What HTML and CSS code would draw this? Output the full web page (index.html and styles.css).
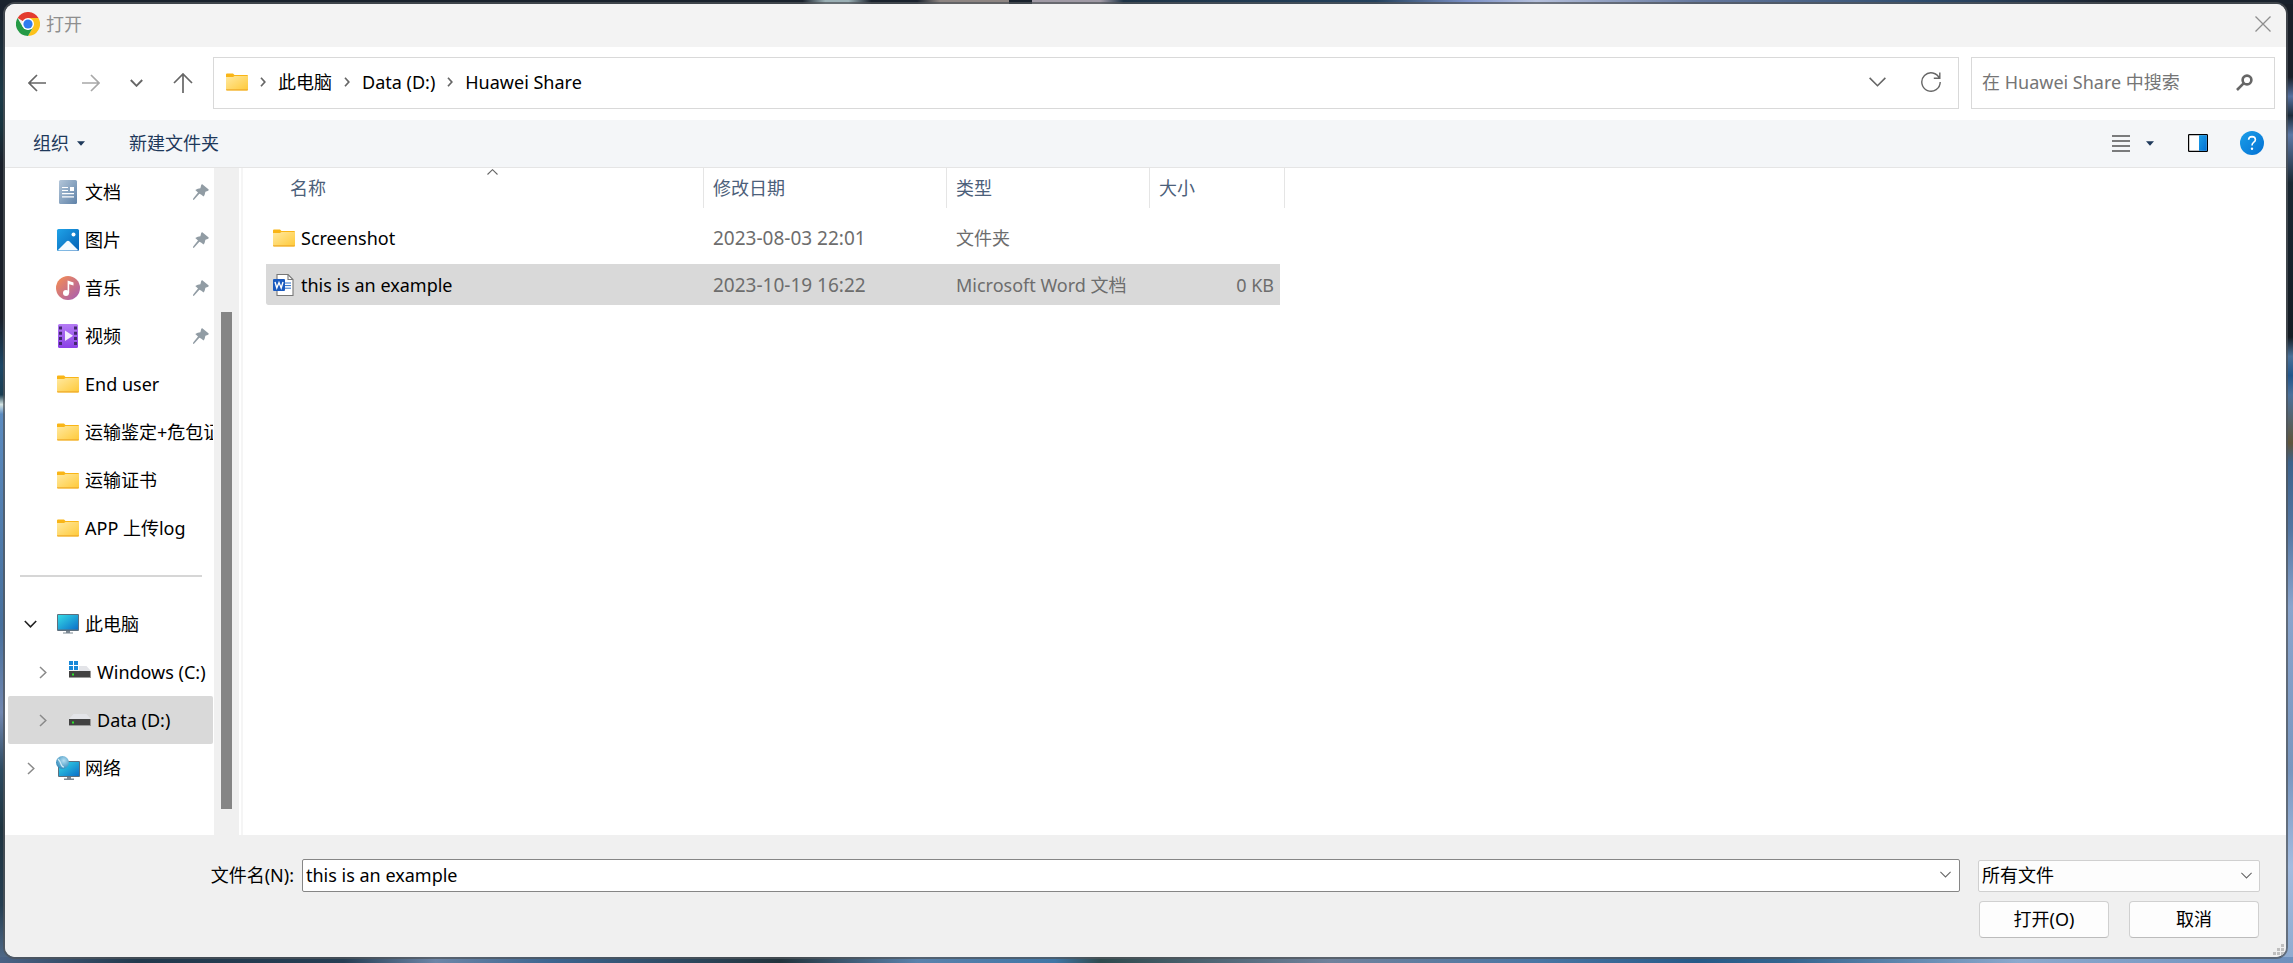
FILE: index.html
```html
<!DOCTYPE html>
<html lang="zh-CN">
<head>
    <meta charset="UTF-8">
    <title>打开</title>
    <meta name="viewport" content="width=device-width, initial-scale=1.0">
    <link rel="stylesheet" href="styles.css">
</head>
<body>
    <!-- shared icons -->
    <svg class="defs" width="0" height="0" aria-hidden="true">
        <defs>
            <linearGradient id="gFolder" x1="0" y1="0" x2="1" y2="1">
                <stop offset="0" stop-color="#ffe9a0"/><stop offset="1" stop-color="#ffc937"/>
            </linearGradient>
            <linearGradient id="gDoc" x1="0" y1="0" x2="1" y2="1">
                <stop offset="0" stop-color="#b3c6d9"/><stop offset="1" stop-color="#5f82a8"/>
            </linearGradient>
            <linearGradient id="gPic" x1="0" y1="0" x2="1" y2="1">
                <stop offset="0" stop-color="#1fa3e8"/><stop offset="1" stop-color="#0560b5"/>
            </linearGradient>
            <linearGradient id="gMusic" x1="0" y1="0" x2="1" y2="1">
                <stop offset="0.1" stop-color="#f08a58"/><stop offset="1" stop-color="#a45bb5"/>
            </linearGradient>
            <linearGradient id="gVideo" x1="0" y1="0" x2="0" y2="1">
                <stop offset="0" stop-color="#b57cf5"/><stop offset="1" stop-color="#8a3fe6"/>
            </linearGradient>
            <linearGradient id="gScreen" x1="0" y1="0" x2="1" y2="1">
                <stop offset="0" stop-color="#35dbe6"/><stop offset="1" stop-color="#0b6fc9"/>
            </linearGradient>
            <linearGradient id="gHelp" x1="0" y1="0" x2="1" y2="1">
                <stop offset="0" stop-color="#1c9fe8"/><stop offset="1" stop-color="#0270d4"/>
            </linearGradient>
            <radialGradient id="gGlobe" cx="0.6" cy="0.35" r="0.7">
                <stop offset="0" stop-color="#b5dff2"/><stop offset="1" stop-color="#2b86b8"/>
            </radialGradient>
            <symbol id="folder" viewBox="0 0 22 18">
                <path d="M0 1.5Q0 0.5 1 0.5H7L8.5 2H21Q22 2 22 3V9H0Z" fill="#f9b517"/>
                <path d="M0 4H7L8.5 3H22V16Q22 17.5 21 17.5H1Q0 17.5 0 16Z" fill="url(#gFolder)"/>
                <path d="M0 16.2H22V16.6Q22 17.5 21 17.5H1Q0 17.5 0 16.6Z" fill="#f0ac2c"/>
            </symbol>
            <symbol id="pin" viewBox="0 0 16 16">
                <path d="M9.3 0.3L15.7 5.6Q15.9 6.7 14.6 7L12.4 7.8Q11.9 10.9 10.6 12.6L8 10.5L6.4 9.8L1 15.8L0 15.9L0.2 14.6L5 8.6L2.3 5.9Q4.8 4.4 7.4 4.3L8.2 1Q8.6 0.1 9.3 0.3Z" fill="#919ca4"/>
            </symbol>
            <symbol id="drive" viewBox="0 0 22 12">
                <path d="M4.5 0H17.5L22 5H0Z" fill="#e3e4e8"/>
                <rect x="0" y="5" width="22" height="7" fill="#9a9a9a"/>
                <rect x="0" y="5" width="21" height="6" fill="#424242"/>
                <rect x="3" y="7.5" width="2" height="2" fill="#2be52b"/>
            </symbol>
            <symbol id="right" viewBox="0 0 8 13">
                <path d="M1 1L6.8 6.5L1 12" fill="none" stroke="currentColor" stroke-width="1.5"/>
            </symbol>
            <symbol id="crumb" viewBox="0 0 6 10">
                <path d="M1 0.8L4.8 5L1 9.2" fill="none" stroke="currentColor" stroke-width="1.7"/>
            </symbol>
            <symbol id="down" viewBox="0 0 16 9">
                <path d="M0.6 0.6L8 8L15.4 0.6" fill="none" stroke="currentColor" stroke-width="1.5"/>
            </symbol>
            <symbol id="triangle" viewBox="0 0 8 5">
                <path d="M0 0.3H8L4 4.8Z" fill="currentColor"/>
            </symbol>
        </defs>
    </svg>

    <div class="dialog">
        <header class="titlebar">
            <svg class="logo" viewBox="0 0 24 24">
                <path d="M12 12L1.6 6A12 12 0 0 1 22.4 6Z" fill="#e33b2e"/>
                <path d="M12 12V0L22.4 6H12Z" fill="#e33b2e"/>
                <path d="M12 6H22.4A12 12 0 0 1 12 24L17.2 15Z" fill="#fcc21b"/>
                <path d="M1.6 6L6.8 15L12 18L17.2 15L12 24A12 12 0 0 1 1.6 6Z" fill="#259a46"/>
                <circle cx="12" cy="12" r="6" fill="#fff"/>
                <circle cx="12" cy="12" r="4.6" fill="#2f7cf0"/>
            </svg>
            <span class="title">打开</span>
            <button class="icon-btn close" aria-label="关闭">
                <svg width="16" height="16" viewBox="0 0 16 16"><path d="M0.5 0.5L15.5 15.5M15.5 0.5L0.5 15.5" stroke="currentColor" stroke-width="1.3"/></svg>
            </button>
        </header>

        <nav class="navbar">
            <div class="nav-buttons">
                <button class="icon-btn back" aria-label="后退">
                    <svg width="18" height="18" viewBox="0 0 18 18"><path d="M18 9H1M9 1L1 9L9 17" fill="none" stroke="#666" stroke-width="1.7"/></svg>
                </button>
                <button class="icon-btn" aria-label="前进">
                    <svg width="18" height="18" viewBox="0 0 18 18"><path d="M0 9H17M9 1L17 9L9 17" fill="none" stroke="#a8a8a8" stroke-width="1.7"/></svg>
                </button>
                <button class="icon-btn" aria-label="最近的位置">
                    <svg width="13" height="8" viewBox="0 0 13 8"><path d="M0.8 1L6.5 6.8L12.2 1" fill="none" stroke="#666" stroke-width="1.9"/></svg>
                </button>
                <button class="icon-btn" aria-label="上移">
                    <svg width="20" height="20" viewBox="0 0 20 20"><path d="M10 20V1M1 10L10 1L19 10" fill="none" stroke="#666" stroke-width="1.7"/></svg>
                </button>
            </div>
            <div class="address">
                <svg width="22" height="18"><use href="#folder"/></svg>
                <svg class="sep" width="6" height="10"><use href="#crumb"/></svg>
                <a href="#">此电脑</a>
                <svg class="sep" width="6" height="10"><use href="#crumb"/></svg>
                <a href="#">Data (D:)</a>
                <svg class="sep" width="6" height="10"><use href="#crumb"/></svg>
                <a href="#">Huawei Share</a>
                <div class="address-tools">
                    <button class="icon-btn" aria-label="以前的位置"><svg width="17" height="10"><use href="#down"/></svg></button>
                    <button class="icon-btn" aria-label="刷新">
                        <svg width="20" height="20" viewBox="0 0 20 20"><path d="M18.5 6.5A9.2 9.2 0 1 0 19.2 10M18.8 0.5V6.2H12.8" fill="none" stroke="currentColor" stroke-width="1.4"/></svg>
                    </button>
                </div>
            </div>
            <div class="search">
                <input type="text" aria-label="搜索" placeholder="在 Huawei Share 中搜索">
                <button class="icon-btn" aria-label="搜索">
                    <svg width="17" height="17" viewBox="0 0 17 17"><circle cx="11" cy="6" r="4.4" fill="none" stroke="currentColor" stroke-width="2.6"/><path d="M7.6 9.4L1 16" stroke="currentColor" stroke-width="2.6"/></svg>
                </button>
            </div>
        </nav>

        <div class="toolbar">
            <button class="tool">组织 <svg width="8" height="5"><use href="#triangle"/></svg></button>
            <button class="tool">新建文件夹</button>
            <div class="views">
                <button class="icon-btn" aria-label="更改视图">
                    <svg width="18" height="17" viewBox="0 0 18 17"><path d="M0 1H18M0 6H18M0 11H18M0 16H18" stroke="#000" stroke-width="1.2"/></svg>
                </button>
                <button class="icon-btn view-more" aria-label="更多选项"><svg width="8" height="5"><use href="#triangle"/></svg></button>
                <button class="icon-btn preview" aria-label="预览窗格">
                    <svg width="20" height="18" viewBox="0 0 20 18"><rect x="0.6" y="0.6" width="18.8" height="16.8" rx="0.6" fill="#fff" stroke="#000" stroke-width="1.2"/><rect x="11" y="1.2" width="7.8" height="15.6" fill="url(#gHelp)"/></svg>
                </button>
                <button class="icon-btn" aria-label="帮助">
                    <svg width="24" height="24" viewBox="0 0 24 24"><circle cx="12" cy="12" r="12" fill="url(#gHelp)"/><path d="M8.6 8.8Q8.8 5.6 12 5.6Q15.4 5.7 15.4 8.7Q15.4 10.3 13.6 11.4Q12 12.5 12 14.6" fill="none" stroke="#fff" stroke-width="1.6"/><circle cx="12" cy="17.8" r="1.2" fill="#fff"/></svg>
                </button>
            </div>
        </div>

        <main class="content">
            <aside class="sidebar">
                <ul class="tree">
                    <li>
                        <svg class="icon" viewBox="0 0 24 24"><rect x="3" width="18" height="24" rx="1.5" fill="url(#gDoc)"/><path d="M6 7.5H12M6 10.5H12M6 13.6H18M6 16.8H18" stroke="#fff" stroke-width="1.2"/><rect x="14" y="7" width="4" height="4" fill="#fff"/></svg>
                        <span>文档</span><svg class="pin"><use href="#pin"/></svg>
                    </li>
                    <li>
                        <svg class="icon" viewBox="0 0 24 24"><rect x="1" y="1" width="22" height="22" rx="1.5" fill="url(#gPic)"/><path d="M2 22L10.5 13.5Q12 12 13.5 13.5L22 22Q21.5 22.6 21 22.6H3Q2.4 22.6 2 22Z" fill="#f4faff"/><circle cx="17.5" cy="6.5" r="2" fill="#fff"/></svg>
                        <span>图片</span><svg class="pin"><use href="#pin"/></svg>
                    </li>
                    <li>
                        <svg class="icon" viewBox="0 0 24 24"><circle cx="12" cy="12" r="12" fill="url(#gMusic)"/><circle cx="10" cy="17" r="3" fill="#fff"/><path d="M11.6 17V4.5L17.5 6.6V9.6L13.2 8.2V17Z" fill="#fff"/></svg>
                        <span>音乐</span><svg class="pin"><use href="#pin"/></svg>
                    </li>
                    <li>
                        <svg class="icon" viewBox="0 0 24 24"><rect x="2" width="20" height="24" rx="1.5" fill="url(#gVideo)"/><path d="M4.5 2.5V22M19.5 2.5V22" stroke="#43286e" stroke-width="3" stroke-dasharray="3 2.2"/><path d="M9 6.5L17 11.8L9 17Z" fill="#f3ecfd"/></svg>
                        <span>视频</span><svg class="pin"><use href="#pin"/></svg>
                    </li>
                    <li><svg class="icon folder"><use href="#folder"/></svg><span>End user</span></li>
                    <li><svg class="icon folder"><use href="#folder"/></svg><span>运输鉴定+危包证</span></li>
                    <li><svg class="icon folder"><use href="#folder"/></svg><span>运输证书</span></li>
                    <li><svg class="icon folder"><use href="#folder"/></svg><span>APP 上传log</span></li>
                </ul>
                <hr>
                <ul class="tree">
                    <li>
                        <svg class="arrow open" viewBox="0 0 13 8"><path d="M0.8 1L6.5 6.8L12.2 1" fill="none" stroke="currentColor" stroke-width="1.6"/></svg>
                        <svg class="icon" viewBox="0 0 24 24"><rect x="1" y="2" width="22" height="17" rx="1" fill="#5d6f7e"/><rect x="2" y="3" width="20" height="14.5" fill="url(#gScreen)"/><path d="M10 19H14V20.5H17V21.5H7V20.5H10Z" fill="#7b8792"/></svg>
                        <span>此电脑</span>
                    </li>
                    <li class="child">
                        <svg class="arrow"><use href="#right"/></svg>
                        <svg class="icon" viewBox="0 0 24 24"><use href="#drive" x="1" y="6" width="22" height="12"/><rect x="0" y="0" width="11" height="10.5" fill="#fff"/><path d="M1 1H5V5H1ZM6 1H10V5H6ZM1 6H5V10H1ZM6 6H10V10H6Z" fill="#1788d8"/></svg>
                        <span>Windows (C:)</span>
                    </li>
                    <li class="child selected">
                        <svg class="arrow"><use href="#right"/></svg>
                        <svg class="icon" viewBox="0 0 24 24"><use href="#drive" x="1" y="6" width="22" height="12"/></svg>
                        <span>Data (D:)</span>
                    </li>
                    <li>
                        <svg class="arrow"><use href="#right"/></svg>
                        <svg class="icon" viewBox="0 0 24 24"><rect x="2" y="5" width="22" height="16" rx="1" fill="#5d6f7e"/><rect x="3" y="6" width="20" height="14" fill="url(#gScreen)"/><path d="M11 21H15V22.5H18V24H8V22.5H11Z" fill="#7b8792"/><circle cx="6.5" cy="6.5" r="6.5" fill="url(#gGlobe)"/><path d="M2 3Q4 5 5 8T8 11" fill="none" stroke="#cfeaf5" stroke-width="1.2"/></svg>
                        <span>网络</span>
                    </li>
                </ul>
            </aside>
            <div class="scrollbar"><div class="thumb"></div></div>
            <section class="files">
                <table>
                    <colgroup>
                        <col class="col-name"><col class="col-date"><col class="col-type"><col class="col-size">
                    </colgroup>
                    <thead>
                        <tr>
                            <th class="sorted">名称<svg class="sort" width="11" height="6" viewBox="0 0 11 6"><path d="M0.5 5.5L5.5 0.7L10.5 5.5" fill="none" stroke="#666" stroke-width="1.1"/></svg></th>
                            <th>修改日期</th>
                            <th>类型</th>
                            <th>大小</th>
                        </tr>
                    </thead>
                    <tbody>
                        <tr>
                            <td><div class="file"><svg class="icon folder"><use href="#folder"/></svg><span>Screenshot</span></div></td>
                            <td class="date">2023-08-03 22:01</td>
                            <td>文件夹</td>
                            <td></td>
                        </tr>
                        <tr class="selected">
                            <td><div class="file">
                                <svg class="icon" viewBox="0 0 24 24"><path d="M5 1.5H16L21 6.5V22.5H5Z" fill="#fff" stroke="#777" stroke-width="1.1"/><path d="M16 1.5V6.5H21" fill="none" stroke="#777" stroke-width="1.1"/><path d="M13 10H19M13 12.6H19M13 15.2H19" stroke="#2b6fc9"/><rect x="1" y="6" width="12" height="12" rx="1" fill="#1a5abf"/><path d="M3 9L4.8 15L7 9.6L9.2 15L11 9" fill="none" stroke="#fff" stroke-width="1.4"/></svg>
                                <span>this is an example</span></div></td>
                            <td class="date">2023-10-19 16:22</td>
                            <td>Microsoft Word 文档</td>
                            <td>0 KB</td>
                        </tr>
                    </tbody>
                </table>
            </section>
        </main>

        <footer class="footer">
            <label for="filename">文件名(N):</label>
            <div class="combo">
                <input type="text" id="filename" value="this is an example">
                <button class="icon-btn" aria-label="文件名列表"><svg width="11" height="7"><use href="#down"/></svg></button>
            </div>
            <div class="filter">
                <select aria-label="文件类型">
                    <option>所有文件</option>
                </select>
                <svg width="11" height="7"><use href="#down"/></svg>
            </div>
            <div class="actions">
                <button class="btn">打开(O)</button>
                <button class="btn">取消</button>
            </div>
            <svg class="grip" width="12" height="12" viewBox="0 0 12 12"><path d="M8 0H11V3H8ZM4 4H7V7H4ZM8 4H11V7H8ZM0 8H3V11H0ZM4 8H7V11H4ZM8 8H11V11H8Z" fill="#bfbfbf"/></svg>
        </footer>
    </div>
</body>
</html>
```
FILE: styles.css
```css
* {
    box-sizing: border-box;
}

/* desktop wallpaper showing around the dialog */
body {
    margin: 0;
    min-height: 100vh;
    display: flex;
    padding: 4px 7px 6px 5px;
    font: 18px/24px "Noto Sans", "Noto Sans CJK SC", sans-serif;
    color: #000;
    background-color: #42688f;
    background-image:
        linear-gradient(to right, #1a222d 0 35%, #9bb0b5 36% 37%, #1a222d 38% 40%, #8d8582 41% 44%, #1a222d 44% 45%, #a09aa5 45% 48%, #1d3245 49%, #22405c 60%, #7d92c8 64%, #b5c0dc 67%, #66799f 74%, #2c4a6c 84%, #1a222d 92%),
        linear-gradient(to right, #4a6285, #22394d 6%, #263e54 15%, #6d86a8 19%, #3d6590 24%, #22333c 34%, #5b82ac 40%, #4076a6 46%, #2f4a4e 48%, #71829c 58%, #4a76a4 67%, #265a88 74%, #35658f 78%, #8ca9cd 88%, #6e90bd),
        linear-gradient(to bottom, #191f2b, #1b3a48 10%, #17343f 13%, #191f2a 17% 33%, #1c4766 38%, #1a3e52 41%, #d5e5e4 42%, #5b8bc0 43%, #47709d 65%, #7187b0 74%, #2c4a60 80%, #1f3440 86%, #263f52 94%, #536c8c),
        linear-gradient(to bottom, #191f28 0 8%, #55709f 10%, #1c2b3a 12%, #5c78a6 14%, #1a2833 19%, #141c24 35%, #4a7199 37%, #23568b 39%, #4c719b 41%, #5f553c 46%, #3d628b 48%, #5376a2 55%, #8aa5cd 63%, #7997c0 80%, #a3bce0 90%, #8daacf);
    background-repeat: no-repeat;
    background-position: 0 0, 0 100%, 0 0, 100% 0;
    background-size: 100% 4px, 100% 6px, 10px 100%, 12px 100%;
}

.defs {
    position: absolute;
}

svg {
    display: block;
    flex: none;
}

button, input, select {
    font: inherit;
    color: inherit;
}

ul {
    list-style: none;
    margin: 0;
    padding: 0;
}

.dialog {
    flex: 1;
    min-width: 0;
    display: flex;
    flex-direction: column;
    background: #fff;
    border-radius: 10px;
    overflow: hidden;
    box-shadow: 0 0 0 2px rgba(80, 84, 88, 0.7);
}

.icon-btn {
    display: flex;
    align-items: center;
    justify-content: center;
    padding: 0;
    border: none;
    background: none;
    color: #666;
}

/* title bar */
.titlebar {
    display: flex;
    align-items: center;
    gap: 6px;
    height: 43px;
    padding: 0 15px 3px 11px;
    background: #f3f3f3;
    color: #8e8e8e;
}

.logo {
    width: 24px;
    height: 24px;
}

.close {
    margin-left: auto;
    color: #8e8e8e;
}

/* navigation */
.navbar {
    display: flex;
    align-items: center;
    gap: 12px;
    height: 73px;
    padding: 0 11px 1px 23px;
}

.nav-buttons {
    display: flex;
    align-items: center;
    gap: 30px;
    margin-right: 8px;
}

.back {
    margin-right: 6px;
}

.address, .search {
    display: flex;
    align-items: center;
    height: 52px;
    border: 1px solid #d9d9d9;
}

.address {
    flex: 1;
    gap: 12px;
    padding: 0 17px 2px 12px;
}

.address a {
    color: inherit;
    text-decoration: none;
}

.sep {
    color: #666;
}

.address-tools {
    display: flex;
    gap: 35px;
    margin-left: auto;
}

.search {
    width: 304px;
    padding: 0 21px 2px 10px;
}

.search input {
    flex: 1;
    min-width: 0;
    padding: 0;
    border: none;
    outline: none;
    background: none;
}

.search input::placeholder {
    color: #757575;
}

/* toolbar */
.toolbar {
    display: flex;
    align-items: center;
    gap: 44px;
    height: 48px;
    padding: 0 22px 1px 28px;
    background: #f4f6f8;
    border-bottom: 1px solid #e5e5e5;
    color: #1e395b;
}

.tool {
    display: flex;
    align-items: center;
    gap: 8px;
    padding: 0;
    border: none;
    background: none;
}

.views {
    display: flex;
    align-items: center;
    margin-left: auto;
}

.view-more {
    margin: 0 34px 0 16px;
    color: #1e395b;
}

.preview {
    margin-right: 32px;
}

/* sidebar */
.content {
    flex: 1;
    display: flex;
    min-height: 0;
}

.sidebar {
    width: 209px;
    padding: 0 1px 0 3px;
    overflow: hidden;
}

.tree li {
    display: flex;
    align-items: center;
    position: relative;
    height: 48px;
    padding-left: 48px;
    border-radius: 2px;
    white-space: nowrap;
    overflow: hidden;
}

.tree .child {
    padding-left: 60px;
}

.selected {
    background: #d9d9d9;
}

.icon {
    width: 24px;
    height: 24px;
    margin-right: 5px;
}

.folder {
    width: 22px;
    height: 18px;
    margin: 0 6px 0 1px;
}

.pin {
    width: 16px;
    height: 16px;
    margin: 0 4px 0 auto;
}

.arrow {
    position: absolute;
    left: 19px;
    width: 8px;
    height: 13px;
    color: #8a8a8a;
}

.child .arrow {
    left: 31px;
}

.arrow.open {
    left: 16px;
    width: 13px;
    height: 8px;
    color: #222;
}

hr {
    height: 2px;
    margin: 23px 11px 23px 12px;
    border: none;
    background: #d6d6d6;
}

.scrollbar {
    width: 25px;
    padding: 144px 7px 26px;
    background: #f0f0f0;
}

.thumb {
    height: 100%;
    background: #858585;
}

/* file list */
.files {
    flex: 1;
    min-width: 0;
    margin-left: 2px;
    padding-left: 23px;
    border-left: 2px solid #f5f5f5;
}

table {
    width: 1019px;
    table-layout: fixed;
    border-collapse: separate;
    border-spacing: 0;
}

.col-name {
    width: 438px;
}

.col-date {
    width: 243px;
}

.col-type {
    width: 203px;
}

.col-size {
    width: 135px;
}

th {
    height: 40px;
    padding: 0 9px;
    border-right: 1px solid #e5e5e5;
    font-weight: normal;
    text-align: left;
    color: #4c607a;
}

.sorted {
    position: relative;
    padding-left: 24px;
}

.sort {
    position: absolute;
    top: 1px;
    left: 221px;
}

tbody::before {
    content: "";
    display: block;
    height: 3px;
}

tbody tr.selected {
    background: none;
}

td {
    height: 47px;
    padding: 0 9px;
    border-top: 6px solid transparent;
    background-clip: padding-box;
    color: #6d6d6d;
}

.selected td {
    background-color: #d9d9d9;
}

td:first-child {
    padding-left: 6px;
    color: #000;
    border-radius: 2px 0 0 2px;
}

td:last-child {
    padding-right: 6px;
    border-right: 5px solid transparent;
    text-align: right;
}

.date {
    font-size: 19px;
}

.file {
    display: flex;
    align-items: center;
}

/* bottom bar */
.footer {
    position: relative;
    display: grid;
    grid-template-columns: 289px 1fr 282px;
    column-gap: 8px;
    row-gap: 9px;
    align-items: center;
    height: 122px;
    padding: 24px 26px 19px 0;
    background: #f0f0f0;
}

.footer label {
    padding-bottom: 2px;
    text-align: right;
}

.combo {
    display: flex;
    align-items: center;
    height: 33px;
    margin-right: 10px;
    padding: 0 8px 2px 3px;
    background: #fff;
    border: 1px solid #868686;
    border-radius: 2px;
}

.combo input {
    flex: 1;
    min-width: 0;
    padding: 0;
    border: none;
    outline: none;
}

.filter {
    position: relative;
}

.filter select {
    display: block;
    width: 100%;
    height: 32px;
    padding: 0 3px 2px;
    appearance: none;
    background: #fdfdfd;
    border: 1px solid #d0d0d0;
    border-radius: 2px;
}

.filter svg {
    position: absolute;
    top: 12px;
    right: 8px;
    color: #666;
    pointer-events: none;
}

.actions {
    grid-column: 3;
    display: flex;
    justify-content: space-between;
    padding: 0 1px;
}

.btn {
    width: 130px;
    height: 37px;
    padding: 0 0 1px;
    background: #fdfdfd;
    border: 1px solid #d0d0d0;
    border-bottom-color: #bcbcbc;
    border-radius: 4px;
}

.grip {
    position: absolute;
    right: 1px;
    bottom: 1px;
}
```
